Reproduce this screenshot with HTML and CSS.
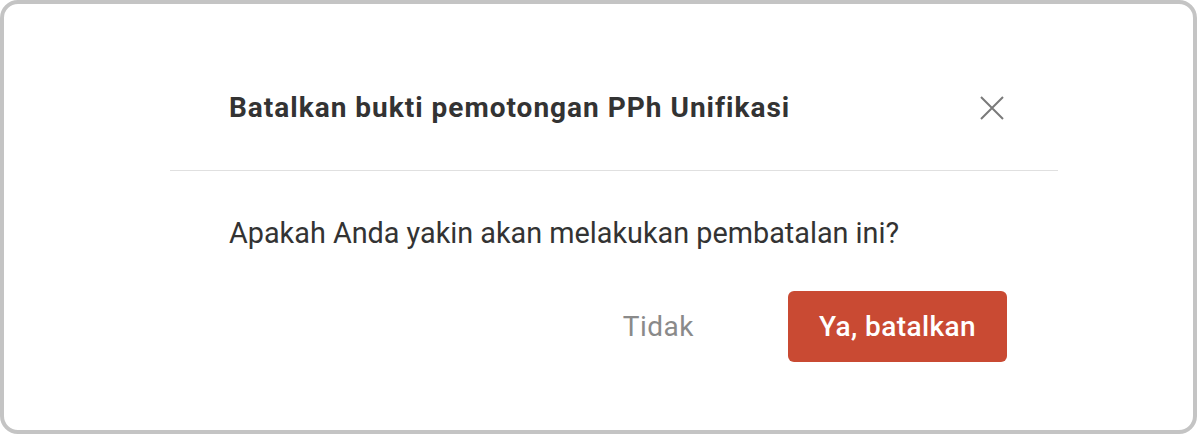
FILE: index.html
```html
<!DOCTYPE html>
<html lang="en">
<head>
  <meta charset="UTF-8">
  <title>Batalkan bukti pemotongan</title>
  <link rel="stylesheet" href="styles.css">
</head>
<body>
  <div class="frame">
    <div class="modal">
      <div class="modal-header">
        <h2 class="modal-title">Batalkan bukti pemotongan PPh Unifikasi</h2>
        <button class="close-btn" aria-label="Tutup">
          <svg width="24" height="24" viewBox="0 0 24 24">
            <path d="M1 1 L23 23 M23 1 L1 23" stroke="#7a7a7a" stroke-width="2" fill="none"/>
          </svg>
        </button>
      </div>
      <div class="modal-body">
        <p>Apakah Anda yakin akan melakukan pembatalan ini?</p>
      </div>
      <div class="modal-footer">
        <button class="btn-link">Tidak</button>
        <button class="btn-danger">Ya, batalkan</button>
      </div>
    </div>
  </div>
</body>
</html>
```

FILE: styles.css
```css
body {
  margin: 0;
  padding: 0;
  font-family: Roboto, 'Liberation Sans', sans-serif;
  background: #fff;
  color: #333;
}

.frame {
  box-sizing: border-box;
  width: 1197px;
  height: 434px;
  border: 4px solid #c4c4c4;
  border-radius: 18px;
  padding: 49px 0 0 166px;
  background: #fff;
}

.modal {
  width: 888px;
  height: 349px;
  background: #fff;
}

.modal-header {
  display: flex;
  align-items: center;
  justify-content: space-between;
  padding: 39px 54px 46px 59px;
  border-bottom: 1px solid #e0e0e0;
}

.modal-title {
  margin: 0;
  font-size: 28px;
  line-height: 32px;
  font-weight: 700;
  letter-spacing: 1px;
  color: #333;
}

.close-btn {
  background: none;
  border: none;
  padding: 0;
  width: 24px;
  height: 24px;
  cursor: pointer;
}

.close-btn svg {
  display: block;
}

.modal-body {
  padding: 44px 59px 0;
}

.modal-body p {
  margin: 0;
  font-size: 28.8px;
  line-height: 36px;
  color: #333;
}

.modal-footer {
  display: flex;
  justify-content: flex-end;
  align-items: center;
  gap: 94px;
  padding: 40px 51px 0;
}

.btn-link {
  background: none;
  border: none;
  padding: 0;
  font-family: inherit;
  font-size: 28px;
  color: #8a8a8a;
  letter-spacing: 0.5px;
  cursor: pointer;
}

.btn-danger {
  width: 219px;
  height: 71px;
  background: #c94a33;
  color: #fff;
  border: none;
  border-radius: 6px;
  font-family: inherit;
  font-size: 28px;
  font-weight: 500;
  letter-spacing: 0.4px;
  cursor: pointer;
}
```
